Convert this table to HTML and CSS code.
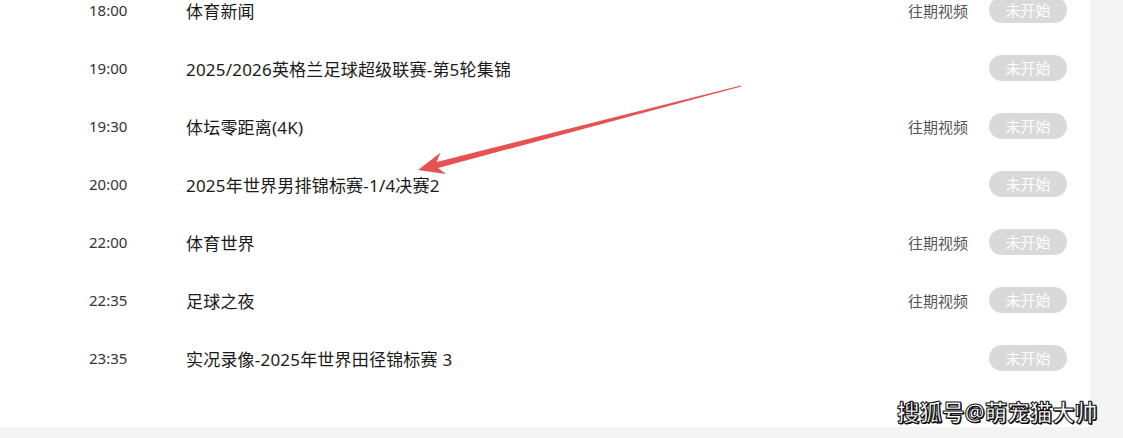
FILE: index.html
```html
<!DOCTYPE html>
<html>
	<head>
		<meta charset="UTF-8">
		<title>节目单</title>
		<link rel="stylesheet" href="styles.css">
	</head>
	<body>
		<div class="page">
			<div class="panel">
				<ul class="list">
					<li class="row">
						<span class="time">18:00</span>
						<span class="title">体育新闻</span>
						<span class="replay">往期视频</span>
						<span class="status">未开始</span>
					</li>
					<li class="row">
						<span class="time">19:00</span>
						<span class="title">2025/2026英格兰足球超级联赛-第5轮集锦</span>
						<span class="status">未开始</span>
					</li>
					<li class="row">
						<span class="time">19:30</span>
						<span class="title">体坛零距离(4K)</span>
						<span class="replay">往期视频</span>
						<span class="status">未开始</span>
					</li>
					<li class="row">
						<span class="time">20:00</span>
						<span class="title">2025年世界男排锦标赛-1/4决赛2</span>
						<span class="status">未开始</span>
					</li>
					<li class="row">
						<span class="time">22:00</span>
						<span class="title">体育世界</span>
						<span class="replay">往期视频</span>
						<span class="status">未开始</span>
					</li>
					<li class="row">
						<span class="time">22:35</span>
						<span class="title">足球之夜</span>
						<span class="replay">往期视频</span>
						<span class="status">未开始</span>
					</li>
					<li class="row">
						<span class="time">23:35</span>
						<span class="title">实况录像-2025年世界田径锦标赛 3</span>
						<span class="status">未开始</span>
					</li>
				</ul>
			</div>
			<!-- 标注箭头 -->
			<svg class="arrow" width="1123" height="438" viewBox="0 0 1123 438">
				<polygon fill="#e65252" points="418,170 445.9,174.1 438.1,167.9 741.2,86.6 740.8,85.4 436.6,162.1 440.4,152.8"/>
			</svg>
			<div class="mark">搜狐号@萌宠猫大帅</div>
		</div>
	</body>
</html>
```
FILE: styles.css
```css
*{
	margin: 0;
	padding: 0;
}
body{
	background: #f4f4f4;
	font-family: "Noto Sans", "Noto Sans CJK SC", sans-serif;
	overflow: hidden;
}
.page{
	width: 1123px;
	height: 438px;
	position: relative;
	overflow: hidden;
}
.panel{
	width: 1090px;
	background: #fff;
	padding-bottom: 40px;
}
.list{
	list-style: none;
	margin-top: -19px;
}
.row{
	height: 58px;
	display: flex;
	align-items: center;
	padding-left: 89px;
	padding-right: 23px;
}
.row .time{
	width: 97px;
	font-size: 15px;
	color: #333;
}
.row .title{
	flex: 1;
	font-size: 17px;
	letter-spacing: 0.2px;
	color: #1a1a1a;
}
.row .replay{
	font-size: 15px;
	color: #555;
	margin-right: 21px;
}
.row .status{
	width: 78px;
	height: 26px;
	line-height: 26px;
	border-radius: 13px;
	background: #d9d9d9;
	color: #fff;
	font-size: 15px;
	text-align: center;
}
.arrow{
	position: absolute;
	left: 0;
	top: 0;
}
.mark{
	position: absolute;
	left: 897px;
	top: 395px;
	font-size: 22.5px;
	font-weight: 700;
	color: #fff;
	-webkit-text-stroke: 1px #111;
	text-shadow: 1px 1px 0 #000;
}
```
